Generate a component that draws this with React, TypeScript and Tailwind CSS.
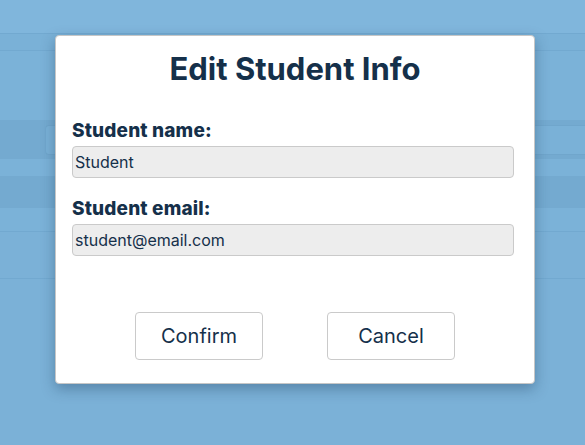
import React from "react"

const navy = "text-[#15304a]"

export default function App() {
  return (
    <div className="relative w-full h-[445px] overflow-hidden bg-[#7bb1d7] font-['Inter',sans-serif]">
      {/* page behind the overlay */}
      <div className="flex flex-col">
        <div className="h-[34px] bg-[#80b6dc] border-b border-[#72a9d0]" />
        <div className="h-[17px] bg-[#7ab1d7] border-b border-[#72a9d0]" />
        <div className="h-[69px] bg-[#7bb2d8]" />
        <div className="h-[39px] bg-[#74aad0] pt-[5px] pl-[45px]">
          <div className="h-[30px] rounded-l-[4px] bg-[#7ab1d7] border-y border-l border-[#70a6cc]" />
        </div>
        <div className="h-[17px] bg-[#7bb2d8]" />
        <div className="h-[32px] bg-[#74aad0]" />
        <div className="h-[24px] bg-[#7bb2d8] border-b border-[#72a9d0]" />
        <div className="h-[47px] bg-[#7bb1d7] border-b border-[#72a9d0]" />
      </div>

      {/* dialog */}
      <div className="absolute left-[55px] top-[35px] w-[480px] h-[349px] bg-white border border-[#c6c6c6] rounded-[4px] shadow-[0_5px_14px_rgba(20,50,80,0.35)] px-4 pt-[15px]">
        <h1 className={`text-center text-[31px] leading-[36px] font-bold ${navy}`}>Edit Student Info</h1>

        <label className={`block mt-[32px] text-[19px] leading-[24px] font-extrabold tracking-[0.15px] ${navy}`}>Student name:</label>
        <div className={`mt-[3px] w-[442px] h-[32px] bg-[#ededed] border border-[#cacaca] rounded-[4px] pl-[2px] flex items-center text-[16px] ${navy}`}>
          Student
        </div>

        <label className={`block mt-[19px] text-[19px] leading-[24px] font-extrabold tracking-[0.15px] ${navy}`}>Student email:</label>
        <div className={`mt-[3px] w-[442px] h-[32px] bg-[#ededed] border border-[#cacaca] rounded-[4px] pl-[2px] flex items-center text-[16px] ${navy}`}>
          student@email.com
        </div>

        <div className="mt-[56px] flex justify-center gap-16">
          <button className={`w-[128px] h-[48px] bg-white border border-[#cacaca] rounded-[4px] text-[20px] ${navy}`}>Confirm</button>
          <button className={`w-[128px] h-[48px] bg-white border border-[#cacaca] rounded-[4px] text-[20px] ${navy}`}>Cancel</button>
        </div>
      </div>
    </div>
  )
}
